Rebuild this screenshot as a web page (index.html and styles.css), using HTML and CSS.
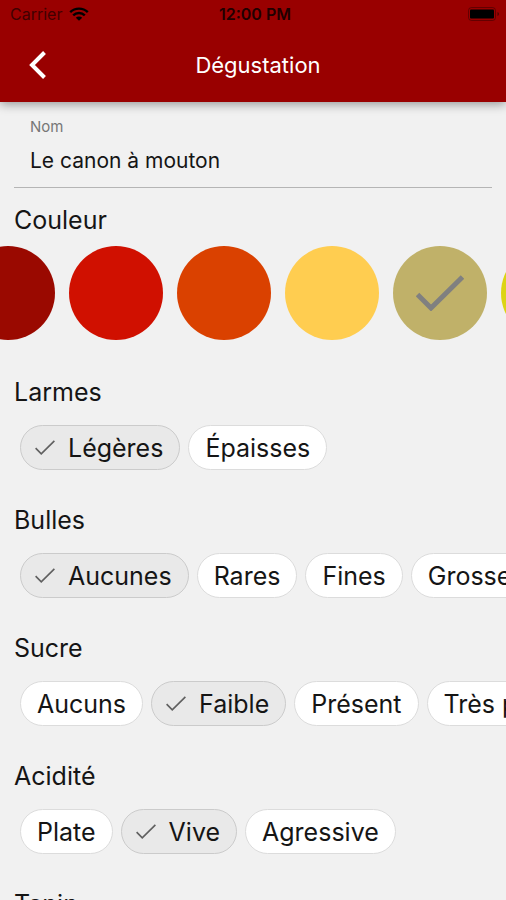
FILE: index.html
```html
<!DOCTYPE html>
<html lang="fr">
<head>
    <meta charset="UTF-8">
    <meta name="viewport" content="width=device-width, initial-scale=1.0">
    <title>Dégustation</title>
    <link rel="stylesheet" href="styles.css">
</head>
<body>

    <header class="header">
        <div class="status-bar">
            <div class="network">
                <span>Carrier</span>
                <svg class="wifi" viewBox="0 0 20 14" aria-hidden="true">
                    <path d="M1.2 5.2a12.6 12.6 0 0 1 17.6 0M4.2 8.4a8.3 8.3 0 0 1 11.6 0" fill="none" stroke="currentColor" stroke-width="2.4"/>
                    <path d="M10 13.8 6.8 10.8a4.6 4.6 0 0 1 6.4 0z" fill="currentColor"/>
                </svg>
            </div>
            <span class="clock">12:00 PM</span>
            <svg class="battery" viewBox="0 0 32 14" aria-hidden="true">
                <rect x="0.5" y="0.5" width="27" height="13" rx="3" fill="none" stroke="currentColor" opacity="0.35"/>
                <rect x="2" y="2.5" width="24" height="9" rx="1" fill="currentColor"/>
                <path d="M29.5 5v4q1.5-.5 1.5-2t-1.5-2z" fill="currentColor" opacity="0.5"/>
            </svg>
        </div>
        <div class="toolbar">
            <button class="back" type="button" aria-label="Retour">
                <svg viewBox="0 0 18 30" aria-hidden="true">
                    <path d="M15.5 2.5 3 15l12.5 12.5" fill="none" stroke="currentColor" stroke-width="4"/>
                </svg>
            </button>
            <h1>Dégustation</h1>
        </div>
    </header>

    <svg width="0" height="0" class="icons" aria-hidden="true">
        <symbol id="check" viewBox="0 0 48 36">
            <path d="M1.5 19.5 15 33 46.5 2" fill="none" stroke="currentColor"/>
        </symbol>
    </svg>

    <main>
        <div class="field">
            <label for="nom">Nom</label>
            <input type="text" id="nom" value="Le canon à mouton">
        </div>

        <section>
            <h2>Couleur</h2>
            <div class="colors">
                <label class="color garnet"><input type="radio" name="couleur" aria-label="Grenat"></label>
                <label class="color ruby"><input type="radio" name="couleur" aria-label="Rubis"></label>
                <label class="color brick"><input type="radio" name="couleur" aria-label="Tuilé"></label>
                <label class="color gold"><input type="radio" name="couleur" aria-label="Or"></label>
                <label class="color straw"><input type="radio" name="couleur" aria-label="Paille" checked><svg><use href="#check"/></svg></label>
                <label class="color lemon"><input type="radio" name="couleur" aria-label="Citron"></label>
            </div>
        </section>

        <section>
            <h2>Larmes</h2>
            <div class="chips">
                <label class="chip"><input type="radio" name="larmes" checked><svg><use href="#check"/></svg>Légères</label>
                <label class="chip"><input type="radio" name="larmes"><svg><use href="#check"/></svg>Épaisses</label>
            </div>
        </section>

        <section>
            <h2>Bulles</h2>
            <div class="chips">
                <label class="chip"><input type="radio" name="bulles" checked><svg><use href="#check"/></svg>Aucunes</label>
                <label class="chip"><input type="radio" name="bulles"><svg><use href="#check"/></svg>Rares</label>
                <label class="chip"><input type="radio" name="bulles"><svg><use href="#check"/></svg>Fines</label>
                <label class="chip"><input type="radio" name="bulles"><svg><use href="#check"/></svg>Grosses</label>
            </div>
        </section>

        <section>
            <h2>Sucre</h2>
            <div class="chips">
                <label class="chip"><input type="radio" name="sucre"><svg><use href="#check"/></svg>Aucuns</label>
                <label class="chip"><input type="radio" name="sucre" checked><svg><use href="#check"/></svg>Faible</label>
                <label class="chip"><input type="radio" name="sucre"><svg><use href="#check"/></svg>Présent</label>
                <label class="chip"><input type="radio" name="sucre"><svg><use href="#check"/></svg>Très présent</label>
            </div>
        </section>

        <section>
            <h2>Acidité</h2>
            <div class="chips">
                <label class="chip"><input type="radio" name="acidite"><svg><use href="#check"/></svg>Plate</label>
                <label class="chip"><input type="radio" name="acidite" checked><svg><use href="#check"/></svg>Vive</label>
                <label class="chip"><input type="radio" name="acidite"><svg><use href="#check"/></svg>Agressive</label>
            </div>
        </section>

        <section>
            <h2>Tanin</h2>
        </section>
    </main>

</body>
</html>
```
FILE: styles.css
```css
* {
    box-sizing: border-box;
}

body {
    display: flex;
    flex-direction: column;
    height: 100vh;
    margin: 0;
    background-color: #f1f1f1;
    color: #151515;
    font-family: Inter, Roboto, sans-serif;
}

/* Header */
.header {
    flex: none;
    z-index: 1;
    background-color: #990000;
    box-shadow: 0 2px 10px rgba(0, 0, 0, 0.4);
}

.status-bar {
    display: grid;
    grid-template-columns: 1fr auto 1fr;
    align-items: center;
    height: 28px;
    padding: 0 6px 0 10px;
    color: #000;
    font-size: 16px;
}

.network {
    display: flex;
    align-items: center;
    gap: 7px;
    color: #400000;
}

.wifi {
    width: 20px;
    height: 14px;
    color: #000;
}

.clock {
    font-weight: 600;
    color: #200000;
}

.battery {
    justify-self: end;
    width: 32px;
    height: 14px;
}

.toolbar {
    display: grid;
    grid-template-columns: 1fr auto 1fr;
    align-items: center;
    height: 74px;
    padding: 0 18px 0 28px;
    color: #fff;
}

.back {
    justify-self: start;
    display: flex;
    padding: 0;
    border: none;
    background: none;
    color: inherit;
    cursor: pointer;
}

.back svg {
    width: 20px;
    height: 30px;
}

h1 {
    margin: 0;
    font-size: 22px;
    font-weight: 400;
}

/* Form */
.icons {
    display: none;
}

main {
    flex: 1;
    overflow: hidden auto;
    scrollbar-width: none;
}

.field {
    margin: 0 14px 16px;
    padding: 16px 16px 13px;
    border-bottom: 1px solid #b5b5b5;
}

.field label {
    display: block;
    color: #777;
    font-size: 15px;
    line-height: 18px;
}

.field input {
    display: block;
    width: 100%;
    height: 28px;
    margin-top: 10px;
    padding: 0;
    border: none;
    outline: none;
    background: none;
    color: inherit;
    font-family: inherit;
    font-size: 21px;
}

h2 {
    margin: 0 14px;
    font-size: 25px;
    font-weight: 400;
    line-height: 32px;
}

.colors,
.chips {
    display: flex;
    overflow-x: auto;
    scrollbar-width: none;
}

.colors {
    gap: 14px;
    margin-left: -39px;
    padding: 10px 0 36px;
}

.color {
    display: flex;
    flex: none;
    align-items: center;
    justify-content: center;
    width: 94px;
    height: 94px;
    border-radius: 50%;
    color: #808080;
    cursor: pointer;
}

.color svg {
    width: 48px;
    height: 36px;
    stroke-width: 5;
}

.garnet { background-color: #9a0900; }
.ruby { background-color: #d01000; }
.brick { background-color: #da4100; }
.gold { background-color: #ffcd50; }
.straw { background-color: #c0b169; }
.lemon { background-color: #dcd414; }

.color input,
.chip input {
    appearance: none;
    width: 0;
    height: 0;
    margin: 0;
}

.chips {
    gap: 8px;
    padding: 17px 20px 34px;
}

.chip {
    display: flex;
    flex: none;
    align-items: center;
    height: 45px;
    padding: 0 16px;
    border: 1px solid #dcdcdc;
    border-radius: 23px;
    background-color: #fff;
    font-size: 25px;
    cursor: pointer;
}

.chip svg {
    display: none;
    width: 20px;
    height: 15px;
    margin: 0 13px 0 -2px;
    color: #606060;
    stroke-width: 4;
}

.chip:has(input:checked) {
    border-color: #cbcbcb;
    background-color: #e9e9e9;
}

.chip input:checked + svg {
    display: block;
}
```
